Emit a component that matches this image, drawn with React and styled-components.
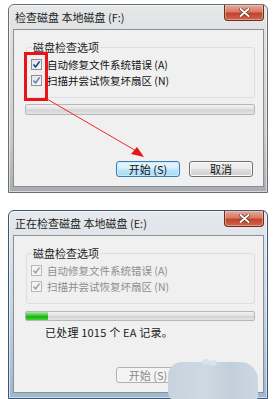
import React from "react";
import styled, { createGlobalStyle, css } from "styled-components";

const Global = createGlobalStyle`
  html, body { margin: 0; padding: 0; background: #ffffff; }
  body { font-family: "Noto Sans CJK SC", "Noto Sans", sans-serif; }
`;

const Page = styled.div`
  position: relative;
  width: 273px;
  height: 399px;
  overflow: hidden;
  display: flex;
  flex-direction: column;
  gap: 17px;
  padding: 4px 0 0 8px;
  box-sizing: border-box;
`;

const Frame = styled.div`
  width: 260px;
  height: 189px;
  flex: none;
  box-sizing: border-box;
  border: 1px solid ${(p) => (p.$active ? "#3a5674" : "#6a6d70")};
  border-radius: 6px 6px 0 0;
  padding: 0 3px 5px 4px;
  display: flex;
  flex-direction: column;
  background: ${(p) =>
    p.$active
      ? "linear-gradient(to bottom, #e6e9ec 0%, #dfe4e9 15%, #c4d2e0 55%, #9fb6cf 100%)"
      : "linear-gradient(to bottom, #e7e8e9 0%, #dcdedf 20%, #c9cbcd 70%, #a9acae 100%)"};
  box-shadow: inset 0 0 0 1px rgba(255, 255, 255, 0.55);
`;

const TitleBar = styled.div`
  height: 24px;
  flex: none;
  display: flex;
  align-items: flex-start;
  justify-content: space-between;
`;

const Title = styled.span`
  font-size: 11px;
  line-height: 11px;
  margin: 7px 0 0 2px;
  color: #1c1c1c;
  white-space: nowrap;
`;

const CloseButton = styled.div`
  width: 40px;
  height: 16px;
  box-sizing: border-box;
  border: 1px solid #6f2a1e;
  border-top: none;
  border-radius: 0 0 4px 4px;
  background: linear-gradient(to bottom, #e9a999 0%, #d67a64 45%, #c2432b 55%, #d0654a 100%);
  box-shadow: inset 0 0 0 1px rgba(255, 220, 210, 0.45);
  display: flex;
  align-items: center;
  justify-content: center;
`;

const Client = styled.div`
  position: relative;
  flex: 1;
  box-sizing: border-box;
  border: 1px solid #8b9096;
  background: #f0f0f0;
  display: flex;
  flex-direction: column;
  padding: 0 10px 9px 11px;
`;

const Group = styled.div`
  position: relative;
  margin-top: 17px;
  margin-left: 1px;
  width: 229px;
  height: 51px;
  box-sizing: border-box;
  border: 1px solid #d9dfe4;
  border-radius: 3px;
  padding: 8px 0 0 4px;
  display: flex;
  flex-direction: column;
`;

const GroupLabel = styled.span`
  position: absolute;
  top: -7px;
  left: 5px;
  padding: 0 1px;
  background: #f0f0f0;
  font-size: 11px;
  line-height: 13px;
  color: #1e1e1e;
`;

const OptionRow = styled.div`
  display: flex;
  align-items: center;
  height: 16px;
  gap: 5px;
  font-size: 10.5px;
  color: ${(p) => (p.$disabled ? "#8e8e8e" : "#111111")};
  white-space: nowrap;
`;

const Box = styled.span`
  width: 11px;
  height: 11px;
  box-sizing: border-box;
  border: 1px solid ${(p) => (p.$disabled ? "#b8b8b8" : "#8a8f94")};
  background: ${(p) =>
    p.$disabled ? "#f4f4f4" : "linear-gradient(135deg, #dfe3e8 0%, #f7f8f9 100%)"};
  display: flex;
  align-items: center;
  justify-content: center;
  flex: none;
`;

const Progress = styled.div`
  margin-top: ${(p) => p.$top}px;
  width: 230px;
  height: ${(p) => p.$height}px;
  box-sizing: border-box;
  border: 1px solid #b5b8ba;
  border-radius: 2px;
  background: linear-gradient(to bottom, #f2f2f2 0%, #e2e2e2 45%, #d3d3d3 55%, #e4e4e4 100%);
  overflow: hidden;
  display: flex;
`;

const ProgressFill = styled.div`
  height: 100%;
  background: linear-gradient(to bottom, #a8eca0 0%, #38c630 45%, #18b010 60%, #45d23c 100%);
`;

const Status = styled.div`
  margin: 3px 0 0 20px;
  font-size: 11px;
  line-height: 16px;
  color: #1a1a1a;
  white-space: nowrap;
  letter-spacing: 0.2px;
`;

const ButtonRow = styled.div`
  margin-top: auto;
  display: flex;
  justify-content: flex-end;
  gap: 9px;
`;

const buttonVariants = {
  focused: css`
    border: 1px solid #3c7fb1;
    background: linear-gradient(to bottom, #eaf6fd 0%, #d9f0fc 45%, #bee6fd 55%, #a7d9f5 100%);
    color: #111;
    box-shadow: inset 0 0 0 1px #c9ecfc;
  `,
  normal: css`
    border: 1px solid #707070;
    background: linear-gradient(to bottom, #f2f2f2 0%, #ebebeb 45%, #dddddd 55%, #cfcfcf 100%);
    color: #111;
    box-shadow: inset 0 0 0 1px #fbfbfb;
  `,
  disabled: css`
    border: 1px solid #adb2b5;
    background: #f4f4f4;
    color: #8a8a8a;
  `,
};

const Button = styled.div`
  width: 64px;
  height: 16px;
  box-sizing: border-box;
  border-radius: 3px;
  display: flex;
  align-items: center;
  justify-content: center;
  font-size: 11px;
  line-height: 11px;
  ${(p) => buttonVariants[p.$variant]}
`;

const Overlay = styled.svg`
  position: absolute;
  left: 0;
  top: 0;
  pointer-events: none;
`;

const Blob = styled.div`
  position: absolute;
  left: 168px;
  top: 362px;
  width: 90px;
  height: 40px;
  border-radius: 14px 18px 6px 10px;
  background: linear-gradient(to right, #c6d2dd 0%, #cfd9e2 40%, #c2cfdb 70%, #ccd7e1 100%);
`;

const Bump = styled.div`
  position: absolute;
  left: ${(p) => p.$x}px;
  top: ${(p) => p.$y}px;
  width: 8px;
  height: 6px;
  border-radius: 50%;
  background: #d9e2ea;
`;

const Check = ({ color }) => (
  <svg width="9" height="9" viewBox="0 0 9 9">
    <path d="M1.5 4.5 L3.6 7 L7.6 1.4" fill="none" stroke={color} strokeWidth="1.6" strokeLinejoin="round" />
  </svg>
);

const CloseGlyph = () => (
  <svg width="11" height="9" viewBox="0 0 11 9">
    <path d="M1.5 1 L9.5 8 M9.5 1 L1.5 8" stroke="#5a2015" strokeWidth="3.2" strokeLinecap="round" />
    <path d="M1.5 1 L9.5 8 M9.5 1 L1.5 8" stroke="#ffffff" strokeWidth="2" strokeLinecap="round" />
  </svg>
);

const Options = ({ disabled, colors }) => (
  <>
    <OptionRow $disabled={disabled}>
      <Box $disabled={disabled}><Check color={colors[0]} /></Box>
      自动修复文件系统错误 (A)
    </OptionRow>
    <OptionRow $disabled={disabled}>
      <Box $disabled={disabled}><Check color={colors[1]} /></Box>
      扫描并尝试恢复坏扇区 (N)
    </OptionRow>
  </>
);

const Window = ({ title, active, children }) => (
  <Frame $active={active}>
    <TitleBar>
      <Title>{title}</Title>
      <CloseButton><CloseGlyph /></CloseButton>
    </TitleBar>
    <Client>{children}</Client>
  </Frame>
);

export default function App() {
  return (
    <>
      <Global />
      <Page>
        <Window title="检查磁盘 本地磁盘 (F:)">
          <Group>
            <GroupLabel>磁盘检查选项</GroupLabel>
            <Options colors={["#1b3e9a", "#6a7fb8"]} />
          </Group>
          <Progress $top={6} $height={11} />
          <ButtonRow>
            <Button $variant="focused">开始 (S)</Button>
            <Button $variant="normal">取消</Button>
          </ButtonRow>
        </Window>
        <Window title="正在检查磁盘 本地磁盘 (E:)" active>
          <Group>
            <GroupLabel>磁盘检查选项</GroupLabel>
            <Options disabled colors={["#a2a2a2", "#a2a2a2"]} />
          </Group>
          <Progress $top={7} $height={10}>
            <ProgressFill style={{ width: `${(22 / 230) * 100}%` }} />
          </Progress>
          <Status>已处理 1015 个 EA 记录。</Status>
          <ButtonRow>
            <Button $variant="disabled">开始 (S)</Button>
            <Button $variant="focused">取消</Button>
          </ButtonRow>
        </Window>
        <Overlay width="273" height="399" viewBox="0 0 273 399">
          <rect x="25.5" y="53.5" width="21" height="46" fill="none" stroke="#e8141a" strokeWidth="3" />
          <line x1="47" y1="99" x2="138" y2="152" stroke="#ee2a2a" strokeWidth="1" />
          <polygon points="144,157 131,154 137,147" fill="#e8141a" />
        </Overlay>
        <Blob />
        <Bump $x={202} $y={359} />
        <Bump $x={209} $y={360} />
      </Page>
    </>
  );
}
